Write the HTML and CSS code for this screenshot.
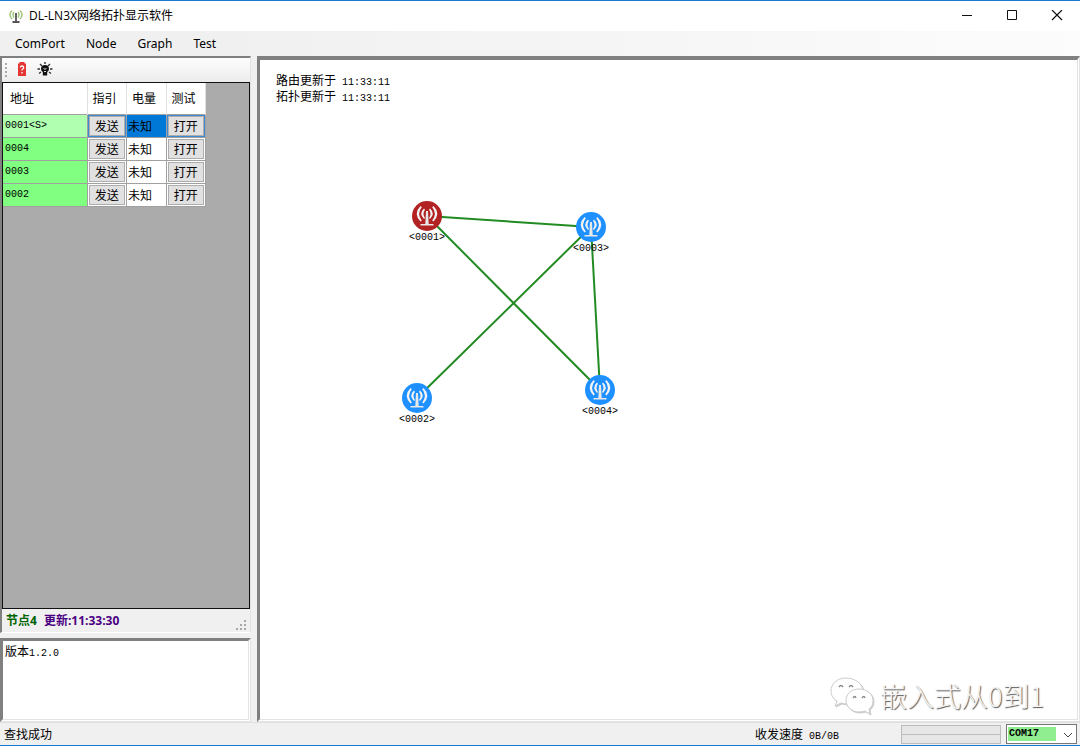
FILE: index.html
```html
<!DOCTYPE html>
<html lang="zh-CN">
<head>
<meta charset="utf-8">
<title>DL-LN3X网络拓扑显示软件</title>
<link rel="stylesheet" href="styles.css">
</head>
<body>
<svg width="0" height="0" class="defs" aria-hidden="true">
  <symbol id="antenna" viewBox="0 0 30 30">
    <circle cx="15" cy="15" r="15" fill="currentColor"/>
    <g fill="#f4f4f4">
      <path d="M8.500 5Q1 12.500 8.500 20.500L9.800 19.500Q4.500 12.500 9.800 6.200z"/>
      <path d="M12 7.500Q6.500 12.500 12 18L13 17Q10 12.500 13 8.700z"/>
      <path d="M21.500 5Q29 12.500 21.500 20.500L20.200 19.500Q25.500 12.500 20.200 6.200z"/>
      <path d="M18 7.500Q23.500 12.500 18 18L17 17Q20 12.500 17 8.700z"/>
    </g>
    <path d="M14 10h2l.7 13h4.800v1.600h-13V23h4.800z" fill="#e8e8e8"/>
  </symbol>
</svg>
<div class="window">
  <header class="titlebar">
    <svg class="app-icon" width="14" height="13" viewBox="0 0 14 13" fill="none">
      <path d="M3 .5Q-1 4.500 3 9M5 2Q3 4.500 5 7.500M11 .5Q15 4.500 11 9M9 2Q11 4.500 9 7.500" stroke="#a3c67c" stroke-width="1.500"/>
      <path d="M7 3v9M3.500 12h7" stroke="#555" stroke-width="1.800"/>
    </svg>
    <h1 class="title">DL-LN3X网络拓扑显示软件</h1>
    <div class="caption-buttons">
      <button class="caption" aria-label="最小化"><svg width="12" height="12" viewBox="0 0 12 12"><path d="M1 5.500h10" stroke="#111"/></svg></button>
      <button class="caption" aria-label="最大化"><svg width="12" height="12" viewBox="0 0 12 12"><path d="M1.500 .5h9v9h-9z" stroke="#111" fill="none"/></svg></button>
      <button class="caption" aria-label="关闭"><svg width="12" height="12" viewBox="0 0 12 12"><path d="M1 0l10 10M11 0L1 10" stroke="#111" stroke-width="1.200"/></svg></button>
    </div>
  </header>
  <nav class="menubar">
    <button class="menu">ComPort</button>
    <button class="menu">Node</button>
    <button class="menu">Graph</button>
    <button class="menu">Test</button>
  </nav>
  <main class="main">
    <aside class="side">
      <section class="devices">
        <div class="toolbar">
          <span class="grip"></span>
          <button class="tool" aria-label="电量查询"><svg width="16" height="16" viewBox="0 0 16 16"><path d="M5.500 0h5v1.500H12V14H4V1.500h1.500z" fill="#e53535"/><path d="M6.300 5.500q.2-1.500 1.700-1.500t1.700 1.500q0 1-1 1.500-.7.400-.7 1.500M8 10v1.500" fill="none" stroke="#fff" stroke-width="1.300"/></svg></button>
          <button class="tool" aria-label="指示灯"><svg width="16" height="16" viewBox="0 0 16 16"><path d="M8 3a4 4 0 0 1 4 4q0 2-1.800 3v3.500H5.800V10Q4 9 4 7a4 4 0 0 1 4-4z" fill="#111"/><path d="M8 0v2M3 2l2 2M13 2l-2 2M.5 7H3M13 7h2.500M2 11.500l2-1.500M14 11.500L12 10" stroke="#333" stroke-width="1.400"/><path d="M6.500 6.500q1.500 1.500 3 0M7 9.500h2" stroke="#ddd" fill="none"/></svg></button>
        </div>
        <div class="grid">
          <table class="nodes">
            <thead><tr><th class="address">地址</th><th>指引</th><th>电量</th><th>测试</th></tr></thead>
            <tbody>
              <tr class="selected"><td class="id">0001&lt;S&gt;</td><td><button class="cell">发送</button></td><td class="power">未知</td><td><button class="cell">打开</button></td></tr>
              <tr><td class="id">0004</td><td><button class="cell">发送</button></td><td class="power">未知</td><td><button class="cell">打开</button></td></tr>
              <tr><td class="id">0003</td><td><button class="cell">发送</button></td><td class="power">未知</td><td><button class="cell">打开</button></td></tr>
              <tr><td class="id">0002</td><td><button class="cell">发送</button></td><td class="power">未知</td><td><button class="cell">打开</button></td></tr>
            </tbody>
          </table>
        </div>
        <div class="summary">
          <span class="count">节点4</span><span class="updated">更新:11:33:30</span>
          <svg class="sizer" width="12" height="12" viewBox="0 0 12 12" fill="#a8a8a8"><path d="M8 0h2v2H8zM4 4h2v2H4zM8 4h2v2H8zM0 8h2v2H0zM4 8h2v2H4zM8 8h2v2H8z"/></svg>
        </div>
      </section>
      <section class="log">版本<span class="mono">1.2.0</span></section>
    </aside>
    <section class="topology">
      <div class="times">
        <p class="time">路由更新于<span class="mono"> 11:33:11</span></p>
        <p class="time">拓扑更新于<span class="mono"> 11:33:11</span></p>
      </div>
      <svg class="graph" width="400" height="400" viewBox="260 60 400 400">
        <g stroke="#228b22" stroke-width="2">
          <path d="M427 216L591 227M427 216L600 390M591 227L600 390M591 227L417 398"/>
        </g>
        <use href="#antenna" x="412" y="201" width="30" height="30" color="#b22222"/>
        <use href="#antenna" x="576" y="212" width="30" height="30" color="#1e90ff"/>
        <use href="#antenna" x="585" y="375" width="30" height="30" color="#1e90ff"/>
        <use href="#antenna" x="402" y="383" width="30" height="30" color="#1e90ff"/>
        <g class="labels">
          <text x="427" y="240">&lt;0001&gt;</text>
          <text x="591" y="251">&lt;0003&gt;</text>
          <text x="600" y="414">&lt;0004&gt;</text>
          <text x="417" y="422">&lt;0002&gt;</text>
        </g>
      </svg>
      <div class="brand">
        <svg class="brand-icon" width="44" height="38" viewBox="0 0 44 38" fill="#fff" stroke="#ccc" stroke-width="1">
          <path d="M16 1C7 1 1 7 1 14c0 4 2 8 6 10l-2 5 6-3q3 1 8 1c8 0 14-6 14-13S25 1 16 1z"/>
          <path d="M29 12c-8 0-13 5-13 11.500S22 35 29 35q3 0 6-1l5 3-1-5c3-2 4-5 4-8.500C43 17 37 12 29 12z"/>
          <path d="M9 10q2-3 4 0M19 10q2-3 4 0M23 21q2-3 3 0M32 21q2-3 3 0" stroke="#888" stroke-width="1.400"/>
        </svg>
        <span class="brand-name">嵌入式从0到1</span>
      </div>
    </section>
  </main>
  <footer class="status">
    <span class="message">查找成功</span>
    <span class="speed">收发速度<span class="mono"> 0B/0B</span></span>
    <div class="meters">
      <progress class="meter" value="0" max="100" aria-label="接收"></progress>
      <progress class="meter" value="0" max="100" aria-label="发送"></progress>
    </div>
    <div class="port">
      <select class="port-select" aria-label="串口"><option>COM17</option></select>
      <svg class="chevron" width="10" height="6" viewBox="0 0 10 6"><path d="M1 1l4 4 4-4" fill="none" stroke="#444"/></svg>
    </div>
  </footer>
</div>
</body>
</html>
```
FILE: styles.css
```css
* { box-sizing: border-box; }
html, body { height: 100%; margin: 0; }
body {
  font: 12px/16px "Noto Sans CJK SC", sans-serif;
  color: #000;
  background: #f0f0f0;
}
button { font: inherit; color: inherit; padding: 0; border: 0; background: none; }
.defs { position: absolute; }
.mono { font-family: "Liberation Mono", monospace; font-size: 10px; line-height: 1; }

.window {
  display: flex;
  flex-direction: column;
  min-height: 100%;
  border-top: 1px solid #1a7ad4;
  border-bottom: 1px solid #1a7ad4;
}

.titlebar { display: flex; align-items: center; height: 30px; padding-left: 9px; background: #fff; }
.title { margin: 0 0 0 6px; font: 12px/16px "Open Sans", "Noto Sans CJK SC", sans-serif; }
.caption-buttons { display: flex; margin: 0 1px 0 auto; }
.caption { display: flex; align-items: center; justify-content: center; width: 45px; height: 28px; }

.menubar {
  display: flex;
  align-items: center;
  gap: 21px;
  height: 25px;
  padding-left: 15px;
  background: linear-gradient(90deg, #f0f0f0, #f0f0f0 20%, #fcfcfc);
  font: 12px/16px "Noto Sans", sans-serif;
}

.main { display: flex; flex: 1; gap: 6px; background: #f0f0f0; }
.side { display: flex; flex-direction: column; gap: 5px; width: 251px; }
.devices {
  display: flex;
  flex: 1;
  flex-direction: column;
  border: solid #808080;
  border-width: 2px 0 0 2px;
  border-right: 1px solid #e3e3e3;
  border-bottom: 1px solid #fff;
}
.toolbar {
  display: flex;
  align-items: center;
  gap: 7px;
  height: 24px;
  padding-left: 3px;
  background: linear-gradient(#fdfdfd, #ececec);
}
.grip { width: 2px; height: 15px; background: repeating-linear-gradient(#aaa 0 2px, transparent 2px 4px); }
.tool { display: flex; width: 16px; height: 16px; }
.grid { flex: 1; border: 1px solid #111; background: #ababab; }

.nodes { table-layout: fixed; width: 203px; border-collapse: collapse; background: #fff; }
.nodes th {
  height: 31px;
  padding: 0 0 0 5px;
  border: solid #e0e0e0;
  border-width: 0 1px 0 0;
  font-weight: 400;
  text-align: left;
}
.nodes .address { width: 84px; padding-left: 7px; }
.nodes td { height: 23px; padding: 0; border: 1px solid #a0a0a0; border-left: 0; }
.nodes .id { padding-left: 2px; background: #80ff80; font: 10px/16px "Liberation Mono", monospace; }
.nodes .power { padding-left: 1px; }
.nodes .selected .id { background: #b0ffb0; }
.nodes .selected .power { background: #0078d7; }
.cell { display: block; width: 36px; height: 20px; margin: auto; border: 1px solid #adadad; background: #e1e1e1; line-height: 16px; }
.selected .cell { outline: 1px solid #3c8ad0; }

.summary {
  display: flex;
  align-items: center;
  gap: 7px;
  height: 23px;
  padding: 0 2px 0 4px;
  font: bold 12px/16px "Open Sans", "Noto Sans CJK SC", sans-serif;
}
.count { color: #006400; }
.updated { color: #4b0082; }
.sizer { margin-left: auto; align-self: flex-end; }
.log {
  height: 84px;
  padding: 2px;
  border: 3px solid #808080;
  border-right: 3px double #e3e3e3;
  border-bottom: 3px double #e3e3e3;
  background: #fff;
}

.topology {
  position: relative;
  flex: 1;
  border: 3px solid #808080;
  border-top-width: 4px;
  border-right: 3px double #e3e3e3;
  border-bottom: 3px double #e3e3e3;
  background: #fff;
}
.times { position: absolute; top: 12px; left: 16px; }
.time { height: 16px; margin: 0; white-space: pre; }
.graph { display: block; }
.labels { font: 10px "Liberation Mono", monospace; text-anchor: middle; }
.brand { position: absolute; right: 33px; bottom: 3px; display: flex; align-items: center; gap: 6px; }
.brand-icon { filter: drop-shadow(1px 1px 0 #ccc); }
.brand-name {
  font: 300 27px/40px "Noto Sans CJK SC", sans-serif;
  color: #f4f4f4;
  text-shadow: 1px 1px 1px #555;
}

.status { display: flex; align-items: center; height: 23px; padding: 0 3px 0 4px; border-top: 1px solid #e0e0e0; }
.speed { margin-left: auto; white-space: pre; }
.meters { display: flex; flex-direction: column; width: 100px; margin: 0 5px 0 62px; }
.meter { display: block; appearance: none; width: 100%; height: 10px; border: 1px solid #bcbcbc; background: #e6e6e6; }
.meter + .meter { margin-top: -1px; }
.meter::-webkit-progress-bar { background: #e6e6e6; }
.port { position: relative; width: 71px; height: 20px; }
.port-select {
  display: block;
  appearance: none;
  width: 100%;
  height: 100%;
  padding: 0 0 1px 2px;
  border: 1px solid #777;
  border-radius: 0;
  background: linear-gradient(#90ee90, #90ee90) 1px 2px / 48px 14px no-repeat #fff;
  font: bold 10px/14px "Liberation Mono", monospace;
  color: #000;
}
.chevron { position: absolute; right: 4px; top: 8px; pointer-events: none; }
```
